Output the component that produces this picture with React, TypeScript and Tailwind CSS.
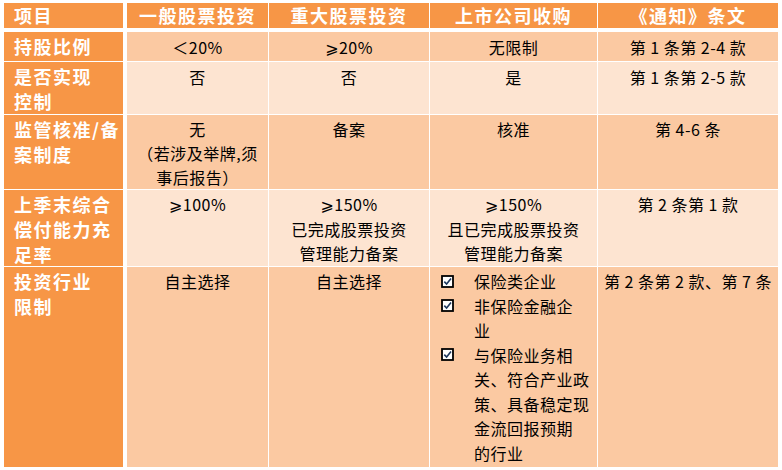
import React from 'react';

const cols = 'grid grid-cols-[126px_141px_160px_167px_180px] grid-rows-[minmax(0,1fr)] gap-x-px';
const font = { fontFamily: '"Noto Sans CJK SC", "DejaVu Sans", sans-serif' };

const headers = ['一般股票投资', '重大股票投资', '上市公司收购', '《通知》条文'];

const CheckBox = () => (
  <svg width="13" height="13" viewBox="0 0 13 13" className="shrink-0">
    <rect x="1" y="1" width="11" height="11" fill="#fff" stroke="#000" strokeWidth="1.8" />
    <path d="M3.3 6.6 L5.6 9 L10 3.6" fill="none" stroke="#1f3a60" strokeWidth="1.6" />
  </svg>
);

const Lines = ({ lines }: { lines: string[] }) => (
  <>
    {lines.map((l, i) => (
      <div key={i} className="whitespace-nowrap">
        {l}
      </div>
    ))}
  </>
);

type Row = { label: string[]; cells: React.ReactNode[]; h: string; bg: string; lead: string };

const bgDark = 'bg-[#fbc9a2]';
const bgLight = 'bg-[#fde4d1]';

const rows: Row[] = [
  { label: ['持股比例'], cells: [['＜20%'], ['⩾20%'], ['无限制'], ['第 1 条第 2-4 款']], h: 'h-[29px]', bg: bgDark, lead: 'leading-[24.5px] pt-[3px]' },
  { label: ['是否实现', '控制'], cells: [['否'], ['否'], ['是'], ['第 1 条第 2-5 款']], h: 'h-[52px]', bg: bgLight, lead: 'leading-[24.5px] pt-[3px]' },
  {
    label: ['监管核准/备', '案制度'],
    cells: [['无', '（若涉及举牌,须', '事后报告）'], ['备案'], ['核准'], ['第 4-6 条']],
    h: 'h-[74px]',
    bg: bgDark,
    lead: 'leading-[24px] pt-[2px]',
  },
  {
    label: ['上季末综合', '偿付能力充', '足率'],
    cells: [['⩾100%'], ['⩾150%', '已完成股票投资', '管理能力备案'], ['⩾150%', '且已完成股票投资', '管理能力备案'], ['第 2 条第 1 款']],
    h: 'h-[76px]',
    bg: bgLight,
    lead: 'leading-[24.5px] pt-[2px]',
  },
  {
    label: ['投资行业', '限制'],
    cells: [['自主选择'], ['自主选择'], 'list', ['第 2 条第 2 款、第 7 条']],
    h: 'h-[200px]',
    bg: bgDark,
    lead: 'leading-[24.5px] pt-[2px]',
  },
];

const listItems = [
  ['保险类企业'],
  ['非保险金融企', '业'],
  ['与保险业务相', '关、符合产业政', '策、具备稳定现', '金流回报预期', '的行业'],
];

export default function App() {
  return (
    <div className="w-[782px] h-[470px] bg-white pt-[3px] overflow-hidden" style={font}>
      <div className={`${cols} h-[25px] text-white font-bold text-[18px] tracking-[1.5px]`}>
        <div className="bg-[#f79646] mr-[3px] ml-[4px] pl-[10px] flex items-center overflow-hidden">项目</div>
        {headers.map((h) => (
          <div key={h} className="bg-[#f79646] flex items-center justify-center overflow-hidden">
            {h}
          </div>
        ))}
      </div>
      <div className="mt-[4px] flex flex-col gap-y-px">
        {rows.map((r, ri) => (
          <div key={ri} className={`${cols} ${r.h} shrink-0`}>
            <div className="bg-[#f79646] ml-[4px] mr-[3px] pl-[10px] pt-[2px] text-white font-bold text-[18px] tracking-[1.5px] leading-[25px] overflow-hidden">
              <Lines lines={r.label} />
            </div>
            {r.cells.map((c, ci) => (
              <div
                key={ci}
                className={`${r.bg} ${r.lead} text-[16px] tracking-[0.5px] text-black overflow-hidden ${
                  c === 'list' ? '' : 'text-center'
                }`}
              >
                {c === 'list' ? (
                  <div className="flex flex-col pl-[11px]">
                    {listItems.map((it, ii) => (
                      <div key={ii} className="flex">
                        <div className="w-[33px] h-[24.5px] flex items-center">
                          <CheckBox />
                        </div>
                        <div>
                          <Lines lines={it} />
                        </div>
                      </div>
                    ))}
                  </div>
                ) : (
                  <Lines lines={c as string[]} />
                )}
              </div>
            ))}
          </div>
        ))}
      </div>
    </div>
  );
}
